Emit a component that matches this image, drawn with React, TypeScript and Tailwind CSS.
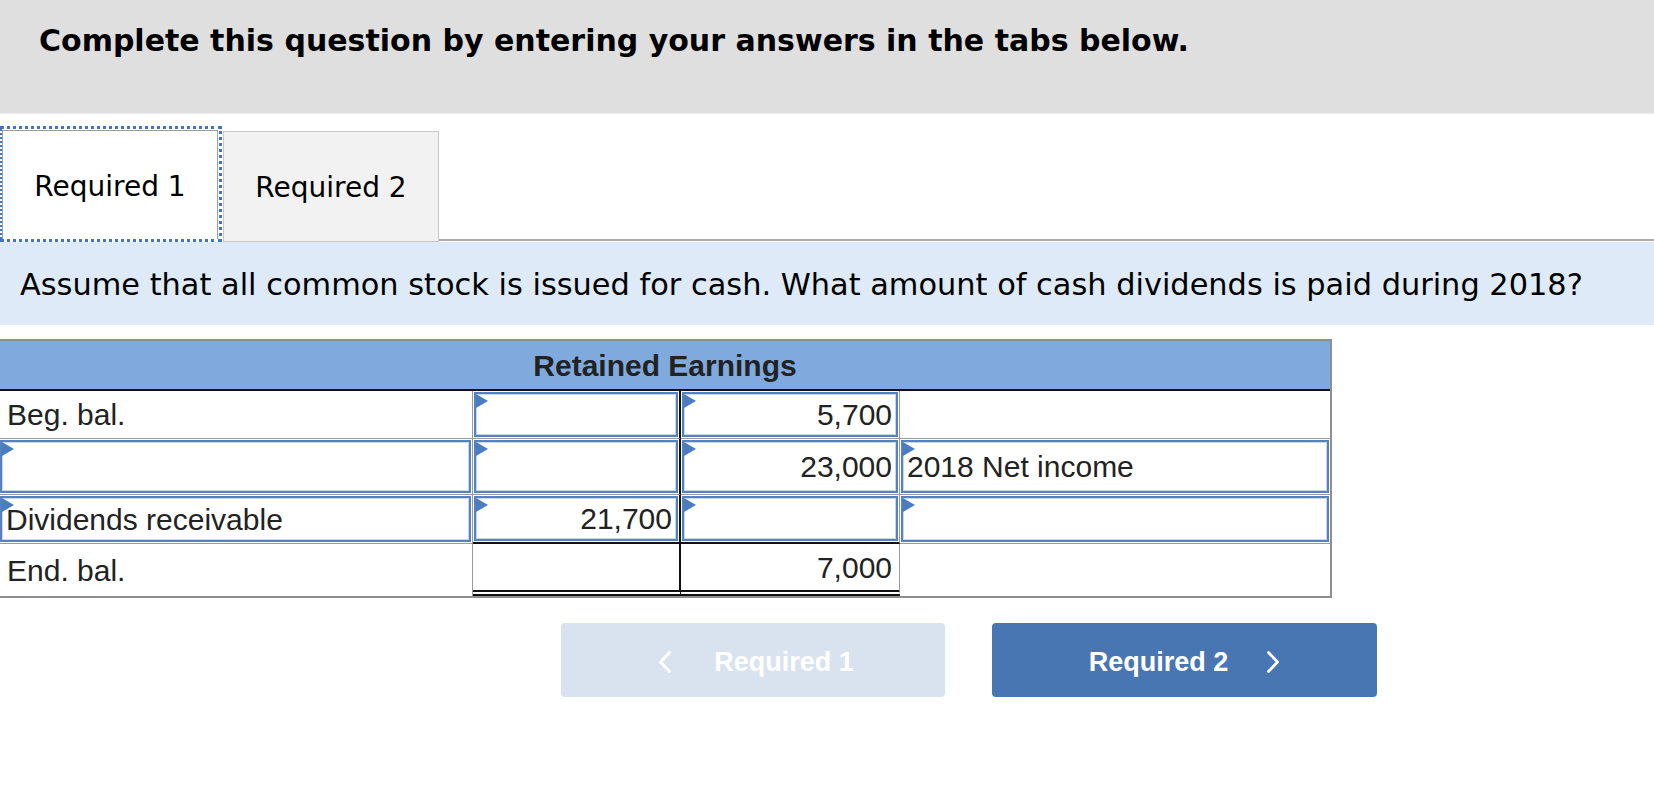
import React from "react"

const tahoma = "font-['DejaVu_Sans',Verdana,sans-serif]"
const arial = "font-['Liberation_Sans',Arial,sans-serif]"

function Flag() {
  return (
    <span className="absolute left-0 top-0 h-0 w-0 border-y-[7px] border-l-[12px] border-y-transparent border-l-[#4a7cc0]" />
  )
}

function Field({ value, align = "left" }: { value?: string; align?: "left" | "right" }) {
  return (
    <div
      className={
        "relative flex h-full items-center border-2 border-[#5580c2] shadow-[inset_0_0_0_1px_#c8d7ee] " +
        (align === "right" ? "justify-end pr-[4px]" : "justify-start pl-[4px]")
      }
    >
      <Flag />
      {value && <span>{value}</span>}
    </div>
  )
}

function Chevron({ dir }: { dir: "left" | "right" }) {
  return (
    <svg width="14" height="24" viewBox="0 0 14 24" fill="none" stroke="currentColor" strokeWidth="2.8" strokeLinecap="round" strokeLinejoin="round">
      {dir === "right" ? <path d="M2.5 2.5 L11.5 12 L2.5 21.5" /> : <path d="M11.5 2.5 L2.5 12 L11.5 21.5" />}
    </svg>
  )
}

export default function App() {
  return (
    <div className="h-[812px] w-[1654px] overflow-hidden bg-white text-black">
      {/* Question banner */}
      <div className="h-[114px] border-b border-[#ececec] bg-[#dfdfdf] pl-[39px] pt-[23px]">
        <h1 className={`${tahoma} text-[30px] font-bold leading-[36px]`}>
          Complete this question by entering your answers in the tabs below.
        </h1>
      </div>

      {/* Tabs */}
      <div className="mt-[12px] flex items-end">
        <div className="border-[3px] border-l-2 border-dotted border-[#4274bf] pr-[1px] pt-[1px]">
          <div className={`${tahoma} flex h-[109px] w-[216px] items-center justify-center border border-b-0 border-[#9f9f9f] bg-white pt-[3px] text-[28px]`}>
            Required 1
          </div>
        </div>
        <div className={`${tahoma} ml-px flex h-[111px] w-[216px] items-center justify-center border border-[#c8c8c8] bg-[#f2f2f2] pt-[3px] text-[28px]`}>
          Required 2
        </div>
        <div className="mb-[1px] h-[2px] flex-1 bg-[#ababab]" />
      </div>

      {/* Instruction */}
      <div className={`${tahoma} flex h-[83px] items-center bg-[#deeaf7] pl-[20px] pt-[3px] text-[30.4px]`}>
        Assume that all common stock is issued for cash. What amount of cash dividends is paid during 2018?
      </div>

      {/* T-account */}
      <div className={`${arial} mt-[14px] w-[1332px] border-y-2 border-r-2 border-[#8e8e8e] text-[30px] text-[#222]`}>
        <div className="flex h-[50px] items-center justify-center border-b-2 border-[#111] bg-[#80aadd] font-bold">
          Retained Earnings
        </div>

        <div className="flex h-[48px]">
          <div className="flex w-[473px] items-center border-b border-r border-[#9a9a9a] pl-[7px]">Beg. bal.</div>
          <div className="w-[208px] border-b border-r-2 border-b-[#9a9a9a] border-r-[#111] p-[1px]">
            <Field />
          </div>
          <div className="w-[219px] border-b border-r border-[#9a9a9a] p-[1px]">
            <Field value="5,700" align="right" />
          </div>
          <div className="flex-1 border-b border-[#9a9a9a]" />
        </div>

        <div className="flex h-[56px]">
          <div className="w-[473px] border-b border-r border-[#9a9a9a] py-[1px] pr-[1px]">
            <Field />
          </div>
          <div className="w-[208px] border-b border-r-2 border-b-[#9a9a9a] border-r-[#111] p-[1px]">
            <Field />
          </div>
          <div className="w-[219px] border-b border-r border-[#9a9a9a] p-[1px]">
            <Field value="23,000" align="right" />
          </div>
          <div className="flex-1 border-b border-[#9a9a9a] p-[1px]">
            <Field value="2018 Net income" />
          </div>
        </div>

        <div className="flex h-[49px]">
          <div className="w-[473px] border-b border-r border-[#9a9a9a] py-[1px] pr-[1px]">
            <Field value="Dividends receivable" />
          </div>
          <div className="w-[208px] border-b-2 border-r-2 border-[#111] p-[1px]">
            <Field value="21,700" align="right" />
          </div>
          <div className="w-[219px] border-b-2 border-r border-b-[#111] border-r-[#9a9a9a] p-[1px]">
            <Field />
          </div>
          <div className="flex-1 border-b border-[#9a9a9a] p-[1px]">
            <Field />
          </div>
        </div>

        <div className="flex h-[52px]">
          <div className="flex w-[473px] items-center border-r border-[#9a9a9a] pl-[7px]">End. bal.</div>
          <div className="w-[208px] border-b-[6px] border-r-2 border-double border-[#111]" />
          <div className="flex w-[219px] items-center justify-end border-b-[6px] border-r border-double border-b-[#111] border-r-[#9a9a9a] pr-[7px]">
            7,000
          </div>
          <div className="flex-1" />
        </div>
      </div>

      {/* Navigation */}
      <div className={`${arial} mt-[25px] flex gap-[47px] pl-[561px] text-[27px] font-bold text-white`}>
        <button className="flex h-[74px] w-[384px] items-center justify-center gap-[42px] rounded-[4px] bg-[#d9e3ef] pl-[6px] pt-[4px]">
          <Chevron dir="left" />
          <span>Required 1</span>
        </button>
        <button className="flex h-[74px] w-[385px] items-center justify-center gap-[38px] rounded-[4px] bg-[#4876b3] pt-[4px]">
          <span>Required 2</span>
          <Chevron dir="right" />
        </button>
      </div>
    </div>
  )
}
